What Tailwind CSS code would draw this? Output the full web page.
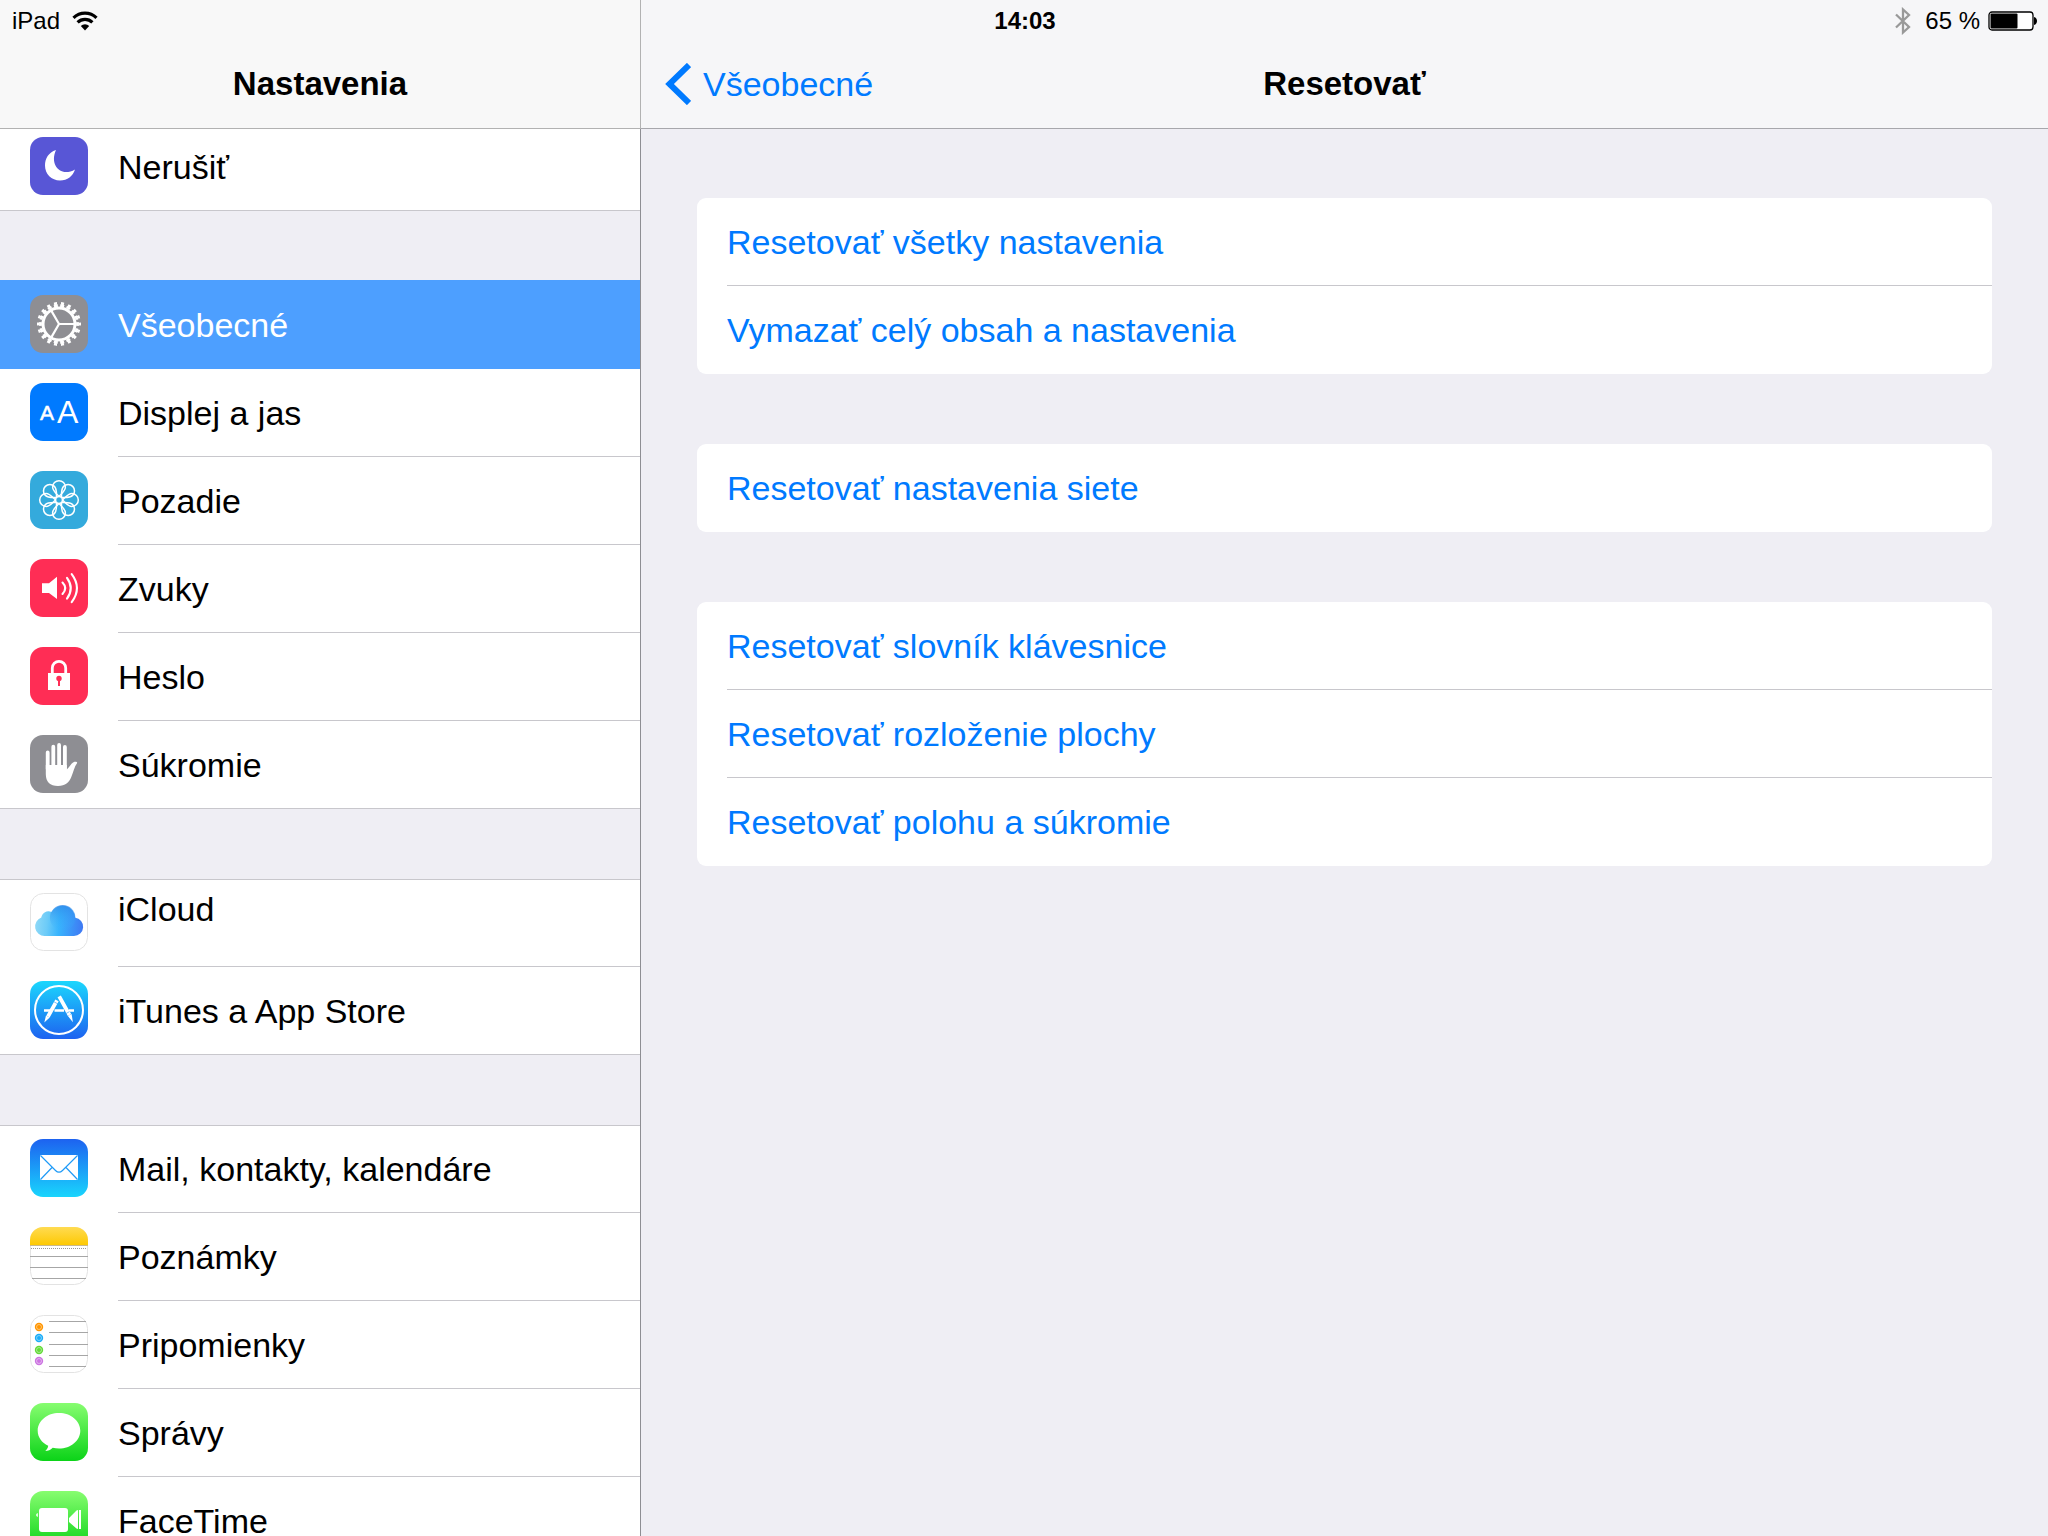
<!DOCTYPE html>
<html lang="sk">

<head>
    <meta charset="UTF-8">
    <meta name="viewport" content="width=device-width, initial-scale=1.0">
    <script src="https://cdn.jsdelivr.net/npm/@tailwindcss/browser@4"></script>
    <title>Nastavenia</title>
</head>

<body class="relative flex h-screen overflow-hidden bg-[#efeef4] font-['Liberation_Sans',Arial,sans-serif] text-[34px] leading-10 text-black">

    <!-- status bar -->
    <div class="absolute inset-x-0 top-0 z-10 grid h-[42px] grid-cols-3 items-center pl-3 pr-2.5 text-2xl">
        <div class="flex items-center gap-3">
            <span>iPad</span>
            <svg class="h-5 w-[26px]" viewBox="0 0 26 20" fill="none" stroke="#000" stroke-width="3.2">
                <path d="M1.5 6.8a16.5 16.5 0 0 1 23 0" />
                <path d="M5.6 11.4a10.6 10.6 0 0 1 14.8 0" />
                <path d="M13 19.5l-4.2-4.6a6 6 0 0 1 8.4 0z" fill="#000" stroke="none" />
            </svg>
        </div>
        <time class="text-center font-bold">14:03</time>
        <div class="flex items-center justify-end gap-2">
            <svg class="mr-1.5 h-7 w-4" viewBox="0 0 16 28" fill="none" stroke="#999" stroke-width="2.3">
                <path d="M1 7.5l13 12.500-6 5.500v-23l6 5.500L1 20.500" />
            </svg>
            <span>65 %</span>
            <svg class="h-5 w-[50px]" viewBox="0 0 50 20">
                <rect x="1" y="1" width="44" height="18" rx="3" fill="#fff" stroke="#000" stroke-width="1.3" />
                <rect x="2.5" y="2.5" width="27" height="15" rx="1" />
                <path d="M46 6c4 .6 4 7.400 0 8z" />
            </svg>
        </div>
    </div>

    <!-- sidebar -->
    <aside class="flex w-[641px] shrink-0 flex-col">
        <header class="z-[1] flex h-[129px] shrink-0 items-center justify-center border-r border-b border-[#b2b2b2] bg-[#f8f8f8] pt-10">
            <h1 class="text-[33px] font-bold">Nastavenia</h1>
        </header>

        <nav class="-mt-1.5 flex flex-col gap-[70px] border-r border-[#8e8e93]">
            <ul class="bg-white">
                <li class="border-b border-[#c8c7cc]">
                    <a href="#" class="flex h-[87px] items-stretch gap-[30px] pl-[30px]">
                        <svg class="mt-3.5 size-[58px]" viewBox="0 0 58 58">
                            <rect width="58" height="58" rx="13" fill="#5856d6" />
                            <path d="M26 13C18.500 15.500 15 21.500 15 28.500C15 37 21.500 43.500 30 43.500C37.500 43.500 43 39 45 32.500C42 34.500 39 35 36 35C27 35 20.500 25 26 13z" fill="#fff" />
                        </svg>
                        <span class="flex flex-1 items-center">Nerušiť</span>
                    </a>
                </li>
            </ul>

            <ul class="bg-white">
                <li>
                    <a href="#" aria-current="page" class="flex h-[88px] items-stretch gap-[30px] bg-[#4d9fff] pl-[30px] text-white shadow-[0_-1px_0_#4d9fff]">
                        <svg class="mt-3.5 size-[58px]" viewBox="0 0 58 58" fill="none" stroke="#fff">
                            <rect width="58" height="58" rx="13" fill="#8e8e93" stroke="none" />
                            <circle cx="29" cy="29" r="16" stroke-width="3" />
                            <circle cx="29" cy="29" r="18.500" stroke-width="2.800" pathLength="36" stroke-dasharray="1.250 .750" stroke-dashoffset=".620" />
                            <circle cx="29" cy="29" r="20.700" stroke-width="2.600" pathLength="36" stroke-dasharray=".850 1.150" stroke-dashoffset=".420" />
                            <path d="M45 29H29L21 15.100M29 29L21 42.900" stroke-width="2.200" />
                        </svg>
                        <span class="flex flex-1 items-center">Všeobecné</span>
                    </a>
                </li>
                <li>
                    <a href="#" class="flex h-[88px] items-stretch gap-[30px] pl-[30px]">
                        <svg class="mt-3.5 size-[58px]" viewBox="0 0 58 58" fill="#fff">
                            <rect width="58" height="58" rx="13" fill="#007aff" />
                            <text x="10" y="37" font-size="21" stroke="#fff" stroke-width=".5">A</text>
                            <text x="27" y="40" font-size="32">A</text>
                        </svg>
                        <span class="flex flex-1 items-center border-b border-[#c8c7cc]">Displej a jas</span>
                    </a>
                </li>
                <li>
                    <a href="#" class="flex h-[88px] items-stretch gap-[30px] pl-[30px]">
                        <svg class="mt-3.5 size-[58px]" viewBox="0 0 58 58" fill="none" stroke="#fff" stroke-width="1.5">
                            <defs>
                                <path id="petal" d="M29 9.700a6.400 6.400 0 0 1 6.400 6.400c0 3.500-2.400 5.200-6.400 9.400c-4-4.200-6.400-5.900-6.400-9.400a6.400 6.400 0 0 1 6.400-6.400z" />
                            </defs>
                            <rect width="58" height="58" rx="13" fill="#34aadc" stroke="none" />
                            <circle cx="29" cy="29" r="3.500" />
                            <use href="#petal" />
                            <use href="#petal" transform="rotate(45 29 29)" />
                            <use href="#petal" transform="rotate(90 29 29)" />
                            <use href="#petal" transform="rotate(135 29 29)" />
                            <use href="#petal" transform="rotate(180 29 29)" />
                            <use href="#petal" transform="rotate(225 29 29)" />
                            <use href="#petal" transform="rotate(270 29 29)" />
                            <use href="#petal" transform="rotate(315 29 29)" />
                        </svg>
                        <span class="flex flex-1 items-center border-b border-[#c8c7cc]">Pozadie</span>
                    </a>
                </li>
                <li>
                    <a href="#" class="flex h-[88px] items-stretch gap-[30px] pl-[30px]">
                        <svg class="mt-3.5 size-[58px]" viewBox="0 0 58 58" fill="none" stroke="#fff" stroke-width="2.1" stroke-linecap="round">
                            <rect width="58" height="58" rx="13" fill="#ff2d55" stroke="none" />
                            <path d="M12 24.300h7l8-6.500V40l-8-6h-7z" fill="#fff" stroke="none" />
                            <path d="M32.500 23.500q5.500 5.700 0 11.500M37 18.800q7.500 10.400 0 20.800M41.700 15.200q10.500 14 0 28" />
                        </svg>
                        <span class="flex flex-1 items-center border-b border-[#c8c7cc]">Zvuky</span>
                    </a>
                </li>
                <li>
                    <a href="#" class="flex h-[88px] items-stretch gap-[30px] pl-[30px]">
                        <svg class="mt-3.5 size-[58px]" viewBox="0 0 58 58">
                            <rect width="58" height="58" rx="13" fill="#ff2d55" />
                            <path d="M22.300 27v-6a6.700 6.700 0 0 1 13.400 0v6" fill="none" stroke="#fff" stroke-width="2.8" />
                            <path d="M18 26h22v17H18z" fill="#fff" />
                            <circle cx="29" cy="31.500" r="2.700" fill="#ff2d55" />
                            <path d="M28 32h2v7h-2z" fill="#ff2d55" />
                        </svg>
                        <span class="flex flex-1 items-center border-b border-[#c8c7cc]">Heslo</span>
                    </a>
                </li>
                <li class="border-b border-[#c8c7cc]">
                    <a href="#" class="flex h-[87px] items-stretch gap-[30px] pl-[30px]">
                        <svg class="mt-3.5 size-[58px]" viewBox="0 0 58 58" fill="#fff">
                            <rect width="58" height="58" rx="13" fill="#8e8e93" />
                            <path d="M17.700 17.500V34M23.300 11.700V34M29.100 10V34M34.900 12V34" stroke="#fff" stroke-width="3.800" stroke-linecap="round" />
                            <path d="M15.800 30V39C15.800 47 20 51 28 51C35.500 51 39 47.500 41.300 42C43.300 37 44.500 31.500 47 28.300C47.800 27 45.500 26.300 43.500 27.200C41 28.500 39.500 32 36.800 34.500V30z" />
                        </svg>
                        <span class="flex flex-1 items-center">Súkromie</span>
                    </a>
                </li>
            </ul>

            <ul class="bg-white shadow-[inset_0_1px_0_#c8c7cc]">
                <li>
                    <a href="#" class="flex h-[88px] items-stretch gap-[30px] pl-[30px]">
                        <svg class="mt-3.5 size-[58px]" viewBox="0 0 58 58">
                            <defs>
                                <linearGradient id="cloud" gradientUnits="userSpaceOnUse" x1="5" y1="30" x2="53" y2="34">
                                    <stop offset="0" stop-color="#8fd9f7" />
                                    <stop offset=".25" stop-color="#6ccbf8" />
                                    <stop offset=".5" stop-color="#38b4fd" />
                                    <stop offset="1" stop-color="#3f78f3" />
                                </linearGradient>
                                <linearGradient id="cloud-top" x1="0" y1="0" x2="0" y2="1">
                                    <stop offset="0" stop-color="#2f86e8" stop-opacity=".75" />
                                    <stop offset="1" stop-color="#38b4fd" stop-opacity="0" />
                                </linearGradient>
                            </defs>
                            <rect x=".5" y=".5" width="57" height="57" rx="13" fill="#fff" stroke="#e3e3e3" />
                            <path d="M14.500 43a9.500 9.500 0 0 1-3.200-18.400A7.200 7.200 0 0 1 21.500 19A12.800 12.800 0 0 1 45.300 24.700A9.200 9.200 0 0 1 44 43z" fill="url(#cloud)" />
                            <circle cx="32.700" cy="24.800" r="12.800" fill="url(#cloud-top)" />
                        </svg>
                        <span class="flex flex-1 items-center border-b border-[#c8c7cc] pb-7">iCloud</span>
                    </a>
                </li>
                <li class="border-b border-[#c8c7cc]">
                    <a href="#" class="flex h-[87px] items-stretch gap-[30px] pl-[30px]">
                        <svg class="mt-3.5 size-[58px]" viewBox="0 0 58 58" fill="none" stroke="#fff">
                            <defs>
                                <linearGradient id="store" x1="0" y1="0" x2="0" y2="1">
                                    <stop offset="0" stop-color="#1bd7fd" />
                                    <stop offset="1" stop-color="#1d62f0" />
                                </linearGradient>
                            </defs>
                            <rect width="58" height="58" rx="13" fill="url(#store)" stroke="none" />
                            <circle cx="29" cy="29" r="24" stroke-width="2" />
                            <path d="M14 29.500h6.500M24.500 29.500h9.500M39 29.500h5" stroke-width="2.600" />
                            <path d="M27 19.300L18 35.500M29.200 15.300L39.500 34" stroke-width="3.800" />
                            <path d="M16 34.500l3.700 2.100-5.400 4.800zM37.900 35l3.700-2.100 1.300 8.400z" fill="#fff" stroke="none" />
                            <path d="M24 20.800l4 2.200M35.500 32.800l4-2.200" stroke="#1f9bf8" stroke-width=".6" />
                        </svg>
                        <span class="flex flex-1 items-center">iTunes a App Store</span>
                    </a>
                </li>
            </ul>

            <ul class="bg-white shadow-[inset_0_1px_0_#c8c7cc]">
                <li>
                    <a href="#" class="flex h-[88px] items-stretch gap-[30px] pl-[30px]">
                        <svg class="mt-3.5 size-[58px]" viewBox="0 0 58 58">
                            <defs>
                                <linearGradient id="mail" x1="0" y1="0" x2="0" y2="1">
                                    <stop offset="0" stop-color="#1d62f0" />
                                    <stop offset="1" stop-color="#19d5fd" />
                                </linearGradient>
                            </defs>
                            <rect width="58" height="58" rx="13" fill="url(#mail)" />
                            <rect x="10" y="16" width="38" height="25" rx="1" fill="#fff" />
                            <path d="M10.500 16.500L25.500 31.500Q29 35 32.500 31.500L47.500 16.500M10.500 40.500L22 28.500M47.500 40.500L36 28.500" fill="none" stroke="#1e9af7" stroke-width="1.200" />
                        </svg>
                        <span class="flex flex-1 items-center border-b border-[#c8c7cc]">Mail, kontakty, kalendáre</span>
                    </a>
                </li>
                <li>
                    <a href="#" class="flex h-[88px] items-stretch gap-[30px] pl-[30px]">
                        <svg class="mt-3.5 size-[58px]" viewBox="0 0 58 58">
                            <defs>
                                <linearGradient id="notes" x1="0" y1="0" x2="0" y2="1">
                                    <stop offset="0" stop-color="#ffdb52" />
                                    <stop offset="1" stop-color="#fdc903" />
                                </linearGradient>
                            </defs>
                            <rect x=".5" y=".5" width="57" height="57" rx="13" fill="#fff" stroke="#e3e3e3" />
                            <path d="M0 18v-5a13 13 0 0 1 13-13h32a13 13 0 0 1 13 13v5z" fill="url(#notes)" />
                            <path d="M0 18.500h58" stroke="#c9b98a" />
                            <path d="M1 21.500h56" stroke="#999" stroke-dasharray="1 1" />
                            <path d="M0 29.500h58M0 40.500h58M2 51.500h54" stroke="#a6a6a6" />
                        </svg>
                        <span class="flex flex-1 items-center border-b border-[#c8c7cc]">Poznámky</span>
                    </a>
                </li>
                <li>
                    <a href="#" class="flex h-[88px] items-stretch gap-[30px] pl-[30px]">
                        <svg class="mt-3.5 size-[58px]" viewBox="0 0 58 58">
                            <rect x=".5" y=".5" width="57" height="57" rx="13" fill="#fff" stroke="#e3e3e3" />
                            <g stroke="#fff" stroke-opacity=".55" stroke-width=".8">
                                <circle cx="9" cy="12" r="4.200" fill="#ff9500" stroke="none" />
                                <circle cx="9" cy="12" r="2.500" fill="#ff9500" />
                                <circle cx="9" cy="23" r="4.200" fill="#1badf8" stroke="none" />
                                <circle cx="9" cy="23" r="2.500" fill="#1badf8" />
                                <circle cx="9" cy="35" r="4.200" fill="#63da38" stroke="none" />
                                <circle cx="9" cy="35" r="2.500" fill="#63da38" />
                                <circle cx="9" cy="46" r="4.200" fill="#cc73e1" stroke="none" />
                                <circle cx="9" cy="46" r="2.500" fill="#cc73e1" />
                            </g>
                            <path d="M19 6.500h37M19 17.500h39M19 29.500h39M19 40.500h39M19 51.500h37" stroke="#a6a6a6" />
                        </svg>
                        <span class="flex flex-1 items-center border-b border-[#c8c7cc]">Pripomienky</span>
                    </a>
                </li>
                <li>
                    <a href="#" class="flex h-[88px] items-stretch gap-[30px] pl-[30px]">
                        <svg class="mt-3.5 size-[58px]" viewBox="0 0 58 58">
                            <defs>
                                <linearGradient id="green" x1="0" y1="0" x2="0" y2="1">
                                    <stop offset="0" stop-color="#87fd70" />
                                    <stop offset="1" stop-color="#0bd318" />
                                </linearGradient>
                            </defs>
                            <rect width="58" height="58" rx="13" fill="url(#green)" />
                            <path d="M29 10C40.800 10 50.300 17.800 50.300 27.700C50.300 37.600 40.800 45.500 29 45.500C26.800 45.500 24.700 45.200 22.700 44.700C20.500 46.800 18 47.900 15.300 48C17 46.500 18 44.800 18.200 42.800C11.800 39.600 7.700 34.200 7.700 27.700C7.700 17.800 17.200 10 29 10z" fill="#fff" />
                        </svg>
                        <span class="flex flex-1 items-center border-b border-[#c8c7cc]">Správy</span>
                    </a>
                </li>
                <li>
                    <a href="#" class="flex h-[88px] items-stretch gap-[30px] pl-[30px]">
                        <svg class="mt-3.5 size-[58px]" viewBox="0 0 58 58" fill="#fff">
                            <rect width="58" height="58" rx="13" fill="url(#green)" />
                            <rect x="9" y="17" width="29" height="24" rx="3" />
                            <path d="M39 27L46.500 19.500L48 19V38L46.500 37.500L39 31zM49 19h2v19h-2zM6.300 23l1.500-1v4l-1.500-1z" />
                        </svg>
                        <span class="flex flex-1 items-center border-b border-[#c8c7cc]">FaceTime</span>
                    </a>
                </li>
            </ul>
        </nav>
    </aside>

    <!-- detail -->
    <main class="flex-1">
        <header class="grid h-[129px] grid-cols-[1fr_auto_1fr] items-center border-b border-[#a7a7ac] bg-[#f6f6f8] pt-10">
            <a href="#" class="flex items-center gap-3 pl-6 text-[#007aff]">
                <svg class="h-[42px] w-[26px]" viewBox="0 0 26 42" fill="none" stroke="#007aff" stroke-width="6">
                    <path d="M24 2L4.500 21L24 40" />
                </svg>
                Všeobecné
            </a>
            <h2 class="text-[33px] font-bold">Resetovať</h2>
        </header>

        <div class="flex flex-col gap-[70px] px-14 pt-[69px] text-[#007aff]">
            <section class="rounded-[9px] bg-white pl-[30px]">
                <button type="button" class="block h-[88px] w-full border-b border-[#c8c7cc] text-left">Resetovať všetky nastavenia</button>
                <button type="button" class="block h-[88px] w-full text-left">Vymazať celý obsah a nastavenia</button>
            </section>
            <section class="rounded-[9px] bg-white pl-[30px]">
                <button type="button" class="block h-[88px] w-full text-left">Resetovať nastavenia siete</button>
            </section>
            <section class="rounded-[9px] bg-white pl-[30px]">
                <button type="button" class="block h-[88px] w-full border-b border-[#c8c7cc] text-left">Resetovať slovník klávesnice</button>
                <button type="button" class="block h-[88px] w-full border-b border-[#c8c7cc] text-left">Resetovať rozloženie plochy</button>
                <button type="button" class="block h-[88px] w-full text-left">Resetovať polohu a súkromie</button>
            </section>
        </div>
    </main>
</body>

</html>
